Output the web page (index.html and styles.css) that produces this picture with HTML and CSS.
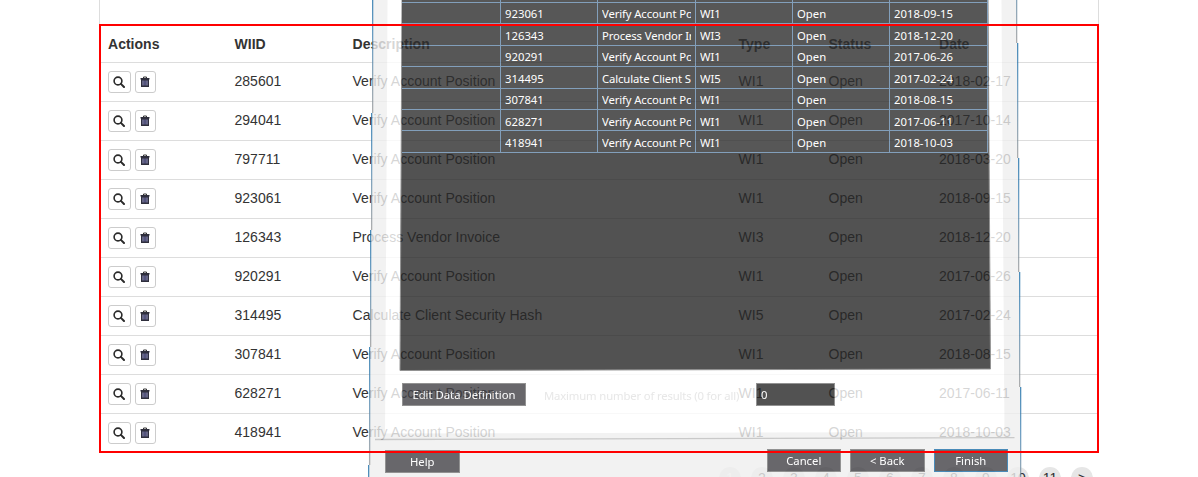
FILE: index.html
```html
<!DOCTYPE html>
<html lang="en">
<head>
<meta charset="utf-8">
<title>Work items</title>
<link rel="stylesheet" href="styles.css">
</head>
<body>
<svg width="0" height="0" class="defs">
  <symbol id="search" viewBox="0 0 12 12"><circle cx="5" cy="5" r="3.9" fill="none" stroke="#2b2b2b" stroke-width="1.6"/><path d="M7.9 7.9 11 11" stroke="#2b2b2b" stroke-width="2" stroke-linecap="round"/></symbol>
  <symbol id="trash" viewBox="0 0 10 12"><path d="M3.5 2V1h3v1" fill="none" stroke="#333" stroke-width="1"/><path d="M.5 2h9v1.500h-9zM1 3h8v8H1z" fill="#2e2e3c"/><path d="M3 4.500v5M7 4.500v5" stroke="#a9a9e0" stroke-width=".9"/><path d="M5 4.500v5" stroke="#8585d0" stroke-width=".9"/></symbol>
</svg>
<main class="page">
  <div class="card">
    <div class="spacer"></div>
    <div class="list" id="list"></div>
  </div>
  <nav class="pager" id="pager"></nav>
</main>
<section class="wizard">
  <svg class="frame" width="1198" height="477">
    <defs>
      <linearGradient id="edge" x1="0" y1="0" x2="0" y2="1"><stop offset="0" stop-color="#1d6fa8"/><stop offset=".4" stop-color="#4c88b4"/><stop offset="1" stop-color="#999"/></linearGradient>
    </defs>
    <path d="M373 0H1016.500L1021 477H368.500z" fill="#efefef"/>
    <path d="M387.500 0H1001.500L1004.500 432 385 433.500z" fill="#fff"/>
    <path d="M402 0H988L990.500 369 400 370.500z" fill="#272727" stroke="#777"/>
    <path d="M375 439.500 1014.500 437.700" stroke="#bcbcbc" stroke-width="1.300"/>
    <g fill="url(#edge)">
      <rect x="372" y="-4" width="1.300" height="117"/><rect x="371" y="113" width="1.300" height="117"/><rect x="370" y="230" width="1.300" height="117"/><rect x="369" y="347" width="1.300" height="118"/><rect x="368" y="465" width="1.300" height="117"/>
      <rect x="1016" y="-72" width="1.300" height="115"/><rect x="1017" y="43" width="1.300" height="115"/><rect x="1018" y="158" width="1.300" height="114"/><rect x="1019" y="272" width="1.300" height="115"/><rect x="1020" y="387" width="1.300" height="115"/>
    </g>
  </svg>
  <div class="wizard-body">
    <div class="grid" id="grid"></div>
    <div class="options">
      <span class="btn edit">Edit Data Definition</span>
      <span class="hint">Maximum number of results (0 for all)</span>
      <span class="field">0</span>
    </div>
    <div class="actions">
      <span class="btn help">Help</span>
      <span class="btn">Cancel</span>
      <span class="btn">&lt; Back</span>
      <span class="btn finish">Finish</span>
    </div>
  </div>
</section>
<div class="highlight"></div>
<script src="app.js"></script>
</body>
</html>
```
FILE: styles.css
```css
body { margin: 0; background: #fff; font: 14px/20px "Liberation Sans", Arial, sans-serif; color: #333; }
.defs { position: absolute; }
.page { height: 477px; overflow: hidden; }
.card { width: 998px; margin-left: 99px; border: solid #ddd; border-width: 0 1px; height: 453px; }
.spacer { height: 24px; }
.row { display: grid; grid-template-columns: 126.500px 118px 386px 90px 110.500px 1fr; height: 38px; padding-left: 8px; border-top: 1px solid #ddd; align-items: center; letter-spacing: .02px; }
.row span { padding-bottom: 3px; }
.row.head { font-weight: bold; border: 0; }
.row.head span { padding-bottom: 0; padding-top: 1px; }
.tools { display: flex; gap: 4px; }
.tool { display: flex; align-items: center; justify-content: center; box-sizing: border-box; width: 23px; height: 22px; padding: 0 1px 1px 0; border: 1px solid #ccc; border-radius: 3px; }
.tool.trash { width: 21px; }
.pager { display: flex; gap: 10px; margin: 14px 0 0 719px; }
.page-link { flex: none; width: 22px; height: 22px; border-radius: 50%; background: #e6e6e6; line-height: 22px; text-align: center; }
.page-link.current { color: #fff; }
.wizard { position: absolute; inset: 0; height: 477px; overflow: hidden; opacity: .8; font: 11.300px/21px "Noto Sans", sans-serif; color: #fff; }
.frame { position: absolute; left: 0; top: 0; }
.wizard-body { position: relative; padding-left: 402px; }
.grid { width: 586px; height: 382.500px; overflow: hidden; }
.grid-row { display: grid; grid-template-columns: 98.500px 97px 98px 97px 97px 98px; height: 21.430px; background: #2e2e2e; box-sizing: border-box; border-bottom: 1.300px solid #6388ab; }
.grid-row:first-child { margin-top: -18.500px; }
.cell { box-sizing: border-box; border-right: 1.300px solid #6388ab; padding: .500px 3.500px 0 4.500px; }
.cell span { display: block; overflow: hidden; white-space: nowrap; }
.cell:nth-child(3) span { letter-spacing: -.12px; }
.options { display: flex; align-items: flex-start; height: 66px; }
.btn { box-sizing: border-box; width: 74.500px; height: 23px; border: 1px solid #777; background: #434247; text-align: center; line-height: 21px; }
.btn.edit { width: 124px; margin-top: .500px; line-height: 22px; }
.hint { color: #e2e2e2; margin: 2px 0 0 18px; width: 212px; white-space: nowrap; font-size: 11.300px; letter-spacing: -.15px; }
.field { box-sizing: border-box; width: 78.500px; height: 23px; border: 1px solid #777; background: #272727; padding-left: 4px; line-height: 21px; }
.actions { display: flex; gap: 9px; margin-left: -17px; }
.btn.help { margin: 1.500px 298px 0 0; line-height: 22px; }
.btn.finish { border-color: #1d6fa8; }
.highlight { position: absolute; left: 99px; top: 24px; width: 996px; height: 425px; border: 2px solid #f00; }
```
FILE: app.js
```js
const ids = [285601, 294041, 797711, 923061, 126343, 920291, 314495, 307841, 628271, 418941];
const dates = ['2018-02-17', '2017-10-14', '2018-03-20', '2018-09-15', '2018-12-20', '2017-06-26', '2017-02-24', '2018-08-15', '2017-06-11', '2018-10-03'];
const names = { 126343: 'Process Vendor Invoice', 314495: 'Calculate Client Security Hash' };
const types = { 126343: 'WI3', 314495: 'WI5' };
const items = ids.map((id, i) => [id, names[id] || 'Verify Account Position', types[id] || 'WI1', 'Open', dates[i]]);

const tools = '<div class="tools"><i class="tool"><svg width="12" height="12"><use href="#search"/></svg></i><i class="tool trash"><svg width="10" height="12"><use href="#trash"/></svg></i></div>';
const cells = values => values.map(v => `<span>${v}</span>`).join('');

document.getElementById('list').innerHTML =
  `<div class="row head">${cells(['Actions', 'WIID', 'Description', 'Type', 'Status', 'Date'])}</div>` +
  items.map(r => `<div class="row">${tools}${cells(r)}</div>`).join('');

document.getElementById('grid').innerHTML = items.slice(2)
  .map(r => `<div class="grid-row">${['', ...r].map(v => `<div class="cell"><span>${v}</span></div>`).join('')}</div>`).join('');

document.getElementById('pager').innerHTML = [1, 2, 3, 4, 5, 6, 7, 8, 9, 10, 11, '&gt;']
  .map((p, i) => `<span class="page-link${i ? '' : ' current'}">${p}</span>`).join('');
```
